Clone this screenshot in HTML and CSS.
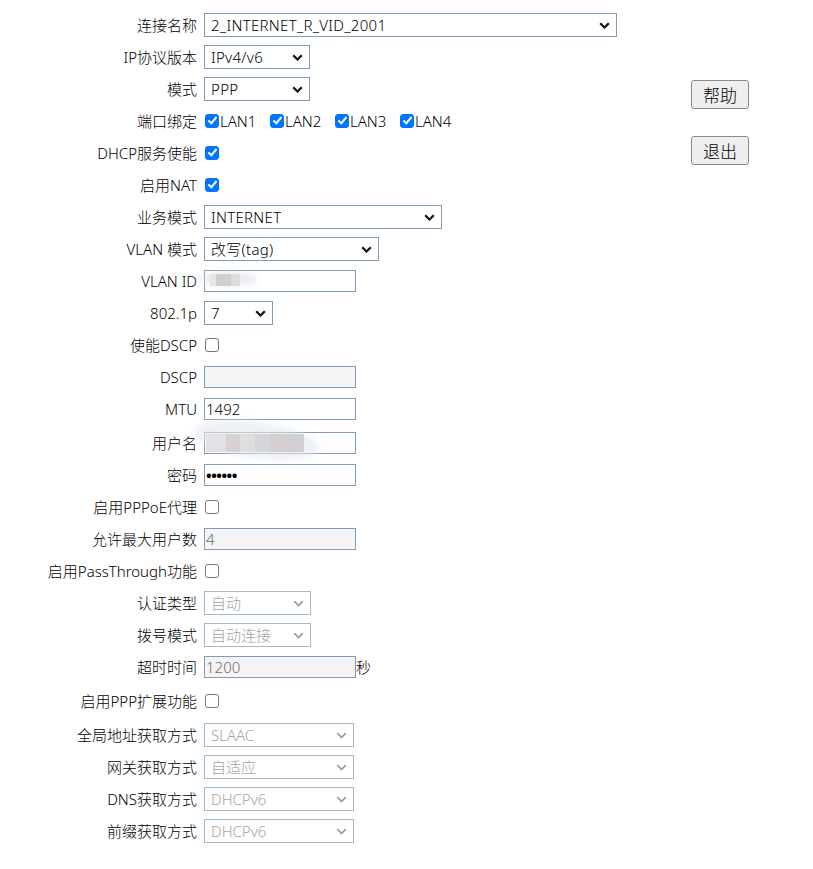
FILE: index.html
```html
<!DOCTYPE html>
<html lang="zh-CN">
<head>
<meta charset="utf-8">
<title>WAN配置</title>
<link rel="stylesheet" href="styles.css">
</head>
<body>
<div class="page">
  <form class="form">
    <div class="row"><label class="lbl">连接名称</label><div class="ctl"><select class="sel w413"><option>2_INTERNET_R_VID_2001</option></select></div></div>
    <div class="row"><label class="lbl">IP协议版本</label><div class="ctl"><select class="sel w106"><option>IPv4/v6</option></select></div></div>
    <div class="row"><label class="lbl">模式</label><div class="ctl"><select class="sel w106"><option>PPP</option></select></div></div>
    <div class="row"><label class="lbl">端口绑定</label><div class="ctl lans">
      <label class="lan"><input type="checkbox" class="cb" checked>LAN1</label>
      <label class="lan"><input type="checkbox" class="cb" checked>LAN2</label>
      <label class="lan"><input type="checkbox" class="cb" checked>LAN3</label>
      <label class="lan"><input type="checkbox" class="cb" checked>LAN4</label>
    </div></div>
    <div class="row"><label class="lbl">DHCP服务使能</label><div class="ctl"><input type="checkbox" class="cb" checked></div></div>
    <div class="row"><label class="lbl">启用NAT</label><div class="ctl"><input type="checkbox" class="cb" checked></div></div>
    <div class="row"><label class="lbl">业务模式</label><div class="ctl"><select class="sel w238"><option>INTERNET</option></select></div></div>
    <div class="row"><label class="lbl">VLAN 模式</label><div class="ctl"><select class="sel w175"><option>改写(tag)</option></select></div></div>
    <div class="row"><label class="lbl">VLAN ID</label><div class="ctl"><span class="blurwrap"><input type="text" class="txt" value=""><span class="blob blob-vlan"></span><span class="pix pix-vlan"></span></span></div></div>
    <div class="row"><label class="lbl">802.1p</label><div class="ctl"><select class="sel w69"><option>7</option></select></div></div>
    <div class="row"><label class="lbl">使能DSCP</label><div class="ctl"><input type="checkbox" class="cb"></div></div>
    <div class="row"><label class="lbl">DSCP</label><div class="ctl"><input type="text" class="txt" disabled value=""></div></div>
    <div class="row"><label class="lbl">MTU</label><div class="ctl"><input type="text" class="txt" value="1492"></div></div>
    <div class="row extra"><label class="lbl">用户名</label><div class="ctl"><span class="blurwrap"><input type="text" class="txt" value=""><span class="blob blob-user"></span><span class="pix pix-user"></span></span></div></div>
    <div class="row"><label class="lbl">密码</label><div class="ctl"><input type="password" class="txt pw" value="123456"></div></div>
    <div class="row"><label class="lbl">启用PPPoE代理</label><div class="ctl"><input type="checkbox" class="cb"></div></div>
    <div class="row"><label class="lbl">允许最大用户数</label><div class="ctl"><input type="text" class="txt" disabled value="4"></div></div>
    <div class="row"><label class="lbl">启用PassThrough功能</label><div class="ctl"><input type="checkbox" class="cb"></div></div>
    <div class="row"><label class="lbl">认证类型</label><div class="ctl"><select class="sel w107" disabled><option>自动</option></select></div></div>
    <div class="row"><label class="lbl">拨号模式</label><div class="ctl"><select class="sel w107" disabled><option>自动连接</option></select></div></div>
    <div class="row"><label class="lbl">超时时间</label><div class="ctl"><input type="text" class="txt" disabled value="1200"><span class="unit">秒</span></div></div>
    <div class="row extra"><label class="lbl">启用PPP扩展功能</label><div class="ctl"><input type="checkbox" class="cb"></div></div>
    <div class="row extra"><label class="lbl">全局地址获取方式</label><div class="ctl"><select class="sel w150" disabled><option>SLAAC</option></select></div></div>
    <div class="row"><label class="lbl">网关获取方式</label><div class="ctl"><select class="sel w150" disabled><option>自适应</option></select></div></div>
    <div class="row"><label class="lbl">DNS获取方式</label><div class="ctl"><select class="sel w150" disabled><option>DHCPv6</option></select></div></div>
    <div class="row"><label class="lbl">前缀获取方式</label><div class="ctl"><select class="sel w150" disabled><option>DHCPv6</option></select></div></div>
  </form>
  <div class="side">
    <button type="button" class="btn">帮助</button>
    <button type="button" class="btn">退出</button>
  </div>
</div>
</body>
</html>
```
FILE: styles.css
```css
html, body {
  margin: 0;
  padding: 0;
  background: #ffffff;
}
body {
  font-family: "Noto Sans", "Noto Sans CJK SC", sans-serif;
  font-size: 15px;
  font-weight: 300;
  color: #000;
}
.page {
  display: flex;
  align-items: flex-start;
}
.form {
  width: 691px;
  padding-top: 9px;
  display: flex;
  flex-direction: column;
}
.row {
  display: grid;
  grid-template-columns: 197px 1fr;
  column-gap: 7px;
  height: 32px;
  align-items: center;
}
.row.extra {
  margin-top: 2px;
}
.lbl {
  text-align: right;
  white-space: nowrap;
  line-height: 18px;
}
.ctl {
  display: flex;
  align-items: center;
}
.sel {
  -webkit-appearance: none;
  appearance: none;
  font-family: "Noto Sans", "Noto Sans CJK SC", sans-serif;
  font-size: 15px;
  font-weight: 300;
  letter-spacing: 0.3px;
  height: 24px;
  box-sizing: border-box;
  border: 1px solid #7f9db9;
  border-radius: 0;
  background-color: #fff;
  background-image: url("data:image/svg+xml,%3Csvg xmlns='http://www.w3.org/2000/svg' width='11' height='7' viewBox='0 0 11 7'%3E%3Cpath d='M1.2 1.2l4.3 4.3 4.3-4.3' fill='none' stroke='%23111' stroke-width='2.2'/%3E%3C/svg%3E");
  background-repeat: no-repeat;
  background-position: right 6px center;
  color: #000;
  padding: 0 22px 0 6px;
  margin: 0;
  line-height: 22px;
}
.sel:disabled {
  border-color: #a5b9cd;
  color: #a3a3a3;
  letter-spacing: 0;
  background-color: #fff;
  background-image: url("data:image/svg+xml,%3Csvg xmlns='http://www.w3.org/2000/svg' width='11' height='7' viewBox='0 0 11 7'%3E%3Cpath d='M1.2 1.2l4.3 4.3 4.3-4.3' fill='none' stroke='%23a0a0a0' stroke-width='1.8'/%3E%3C/svg%3E");
  opacity: 1;
}
.w413 { width: 413px; }
.w106 { width: 106px; }
.w107 { width: 107px; }
.w238 { width: 238px; }
.w175 { width: 175px; }
.w69 { width: 69px; }
.w150 { width: 150px; }
.txt {
  font-family: "Noto Sans", "Noto Sans CJK SC", sans-serif;
  font-size: 15px;
  font-weight: 300;
  width: 152px;
  height: 22px;
  box-sizing: border-box;
  border: 1px solid #7f9db9;
  border-radius: 0;
  padding: 0 1px;
  margin: 0;
  color: #000;
  background: #fff;
}
.txt:disabled {
  background: #f4f4f4;
  color: #6d6d6d;
}
.pw {
  font-size: 15px;
  font-weight: 700;
  letter-spacing: -0.5px;
}
.cb {
  -webkit-appearance: none;
  appearance: none;
  position: relative;
  box-sizing: border-box;
  width: 14px;
  height: 14px;
  margin: 0 0 1px 1px;
  border: 1.5px solid #767676;
  border-radius: 3px;
  background: #fff;
  flex: none;
}
.cb:checked {
  background: #0075ff;
  border-color: #0075ff;
}
.cb:checked::after {
  content: "";
  position: absolute;
  left: 3.5px;
  top: 0.5px;
  width: 3px;
  height: 7px;
  border: solid #fff;
  border-width: 0 2.2px 2.2px 0;
  transform: rotate(40deg);
}
.lan {
  display: inline-flex;
  align-items: center;
  width: 65px;
  gap: 1px;
}
.unit {
  margin-top: -2px;
}
.blurwrap {
  position: relative;
  display: inline-block;
  height: 22px;
}
.blurwrap .txt {
  display: block;
}
.blob {
  position: absolute;
  border-radius: 50%;
  background: rgba(215, 220, 228, 0.55);
  filter: blur(3px);
  pointer-events: none;
}
.pix {
  position: absolute;
  pointer-events: none;
  filter: blur(0.6px);
}
.blob-vlan {
  left: -6px;
  top: 2px;
  width: 60px;
  height: 14px;
}
.pix-vlan {
  left: 6px;
  top: 4px;
  width: 30px;
  height: 12px;
  background: linear-gradient(90deg, #e6e6e6 0 20%, #cfcfcf 20% 70%, #dcdcdc 70% 100%);
}
.blob-user {
  left: -10px;
  top: -10px;
  width: 125px;
  height: 36px;
  transform: rotate(8deg);
  background: rgba(225, 230, 238, 0.6);
}
.pix-user {
  left: 2px;
  top: 2px;
  width: 98px;
  height: 18px;
  background: linear-gradient(90deg, #e2e2e4 0 20%, #d9d2d4 20% 35%, #dedede 35% 50%, #d4d6d8 50% 65%, #d6cfd1 65% 80%, #d2cfd2 80% 100%);
}
.side {
  display: flex;
  flex-direction: column;
  gap: 27px;
  padding-top: 80px;
}
.btn {
  width: 58px;
  height: 29px;
  box-sizing: border-box;
  font-family: "Noto Sans CJK SC", "Noto Sans", sans-serif;
  font-size: 17px;
  font-weight: 300;
  line-height: 1;
  padding: 0;
  background: #efefef;
  border: 1px solid #8a8a8a;
  border-radius: 3px;
  color: #000;
}
```
